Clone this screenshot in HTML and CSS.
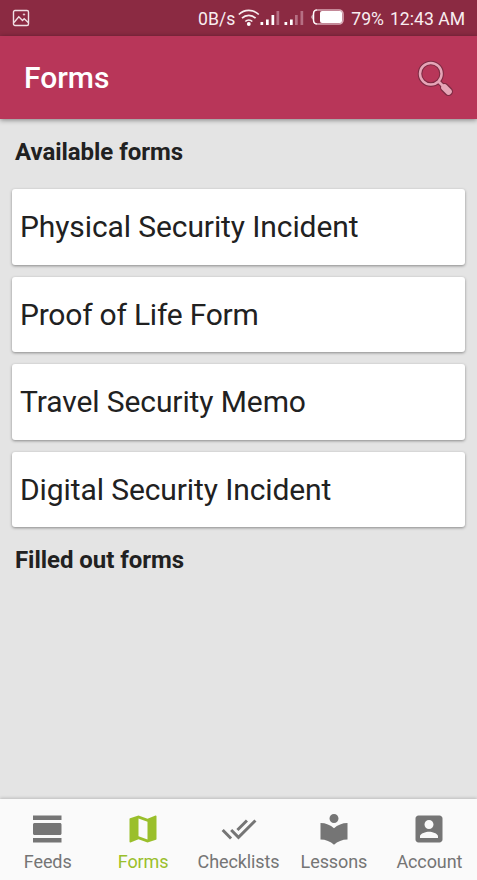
FILE: index.html
```html
<!DOCTYPE html>
<html lang="en">
<head>
<meta charset="utf-8">
<title>Forms</title>
<link rel="stylesheet" href="styles.css">
</head>
<body>
<div class="screen">
  <div class="status">
    <svg class="status-picture" width="18" height="18" viewBox="0 0 18 18" fill="none" stroke="#f0dfe4" stroke-width="1.4"><rect x="1.5" y="1.5" width="15" height="15" rx="1.5"/><path d="M2 13.5 6.8 7.8l3.7 3.7 1.7-1.8 4 3.800"/><circle cx="12" cy="5.500" r=".7" fill="#f0dfe4" stroke-width=".8"/></svg>
    <span class="speed">0B/s</span>
    <svg class="signals" width="106" height="20" viewBox="0 0 106 20">
      <g fill="none" stroke="#f8edf0" stroke-width="1.7"><path d="M.8 6.500a14.200 14.200 0 0 1 20 0M4 10.200a9.600 9.600 0 0 1 13.600 0M7.300 13.500a5 5 0 0 1 7 0"/></g>
      <circle cx="10.800" cy="16" r="1.900" fill="#fff"/>
      <path d="M22.500 14h2.700v3h-2.700zM28 11.500h2.700V17H28zM33.500 7h2.700v10h-2.700zM46.500 14h2.700v3h-2.700zM52 11.500h2.700V17H52z" fill="#fff"/>
      <path d="M38.500 3h2.700v14h-2.700zM57 7h2.700v10H57zM62.500 3h2.700v14h-2.700z" fill="#b66f83"/>
      <rect x="75.500" y="2" width="29.500" height="14" rx="4" fill="none" stroke="#d8a9b5" stroke-width="1.600"/>
      <path d="M79 2h-.5q-3 0-3 4v6q0 4 3.500 4" fill="none" stroke="#fff" stroke-width="1.200"/>
      <rect x="82" y="3" width="22" height="12" rx="2" fill="#fff"/>
      <path d="M74.500 6.500q-2 2.500 0 5z" fill="#fff"/>
    </svg>
    <span class="battery">79%</span>
    <span class="clock">12:43 AM</span>
  </div>
  <header class="appbar">
    <h1>Forms</h1>
    <svg class="search" width="40" height="40" viewBox="0 0 40 40">
      <g stroke-linecap="round" fill="none"><g stroke="#7d2b43"><circle cx="15.800" cy="15.800" r="10.800" stroke-width="4.600"/><path d="m24 24 4 4" stroke-width="5"/><path d="m29.500 29.500 4 4" stroke-width="9"/></g>
      <g stroke="#e6a5b7"><circle cx="15.800" cy="15.800" r="10.800" stroke-width="2.500"/><path d="m24 24 4 4" stroke-width="2.800"/><path d="m29.500 29.500 4 4" stroke-width="6.600"/></g></g>
    </svg>
  </header>
  <main class="content">
    <h2>Available forms</h2>
    <div class="cards">
      <div class="card"><span>Physical Security Incident</span></div>
      <div class="card tight"><span>Proof of Life Form</span></div>
      <div class="card"><span>Travel Security Memo</span></div>
      <div class="card"><span>Digital Security Incident</span></div>
    </div>
    <h2 class="filled">Filled out forms</h2>
  </main>
  <nav class="tabs">
    <div class="tab"><svg viewBox="0 0 24 24"><path d="M2 21h19v-3H2v3zM20 8H3c-.55 0-1 .45-1 1v6c0 .55.45 1 1 1h17c.55 0 1-.45 1-1V9c0-.55-.45-1-1-1zM2 3v3h19V3H2z"/></svg><span>Feeds</span></div>
    <div class="tab active"><svg viewBox="0 0 24 24"><path d="M20.500 3l-.16.030L15 5.100 9 3 3.360 4.900c-.21.070-.36.250-.36.480V20.500c0 .280.220.500.500.500l.160-.030L9 18.900l6 2.100 5.640-1.900c.210-.070.360-.250.360-.480V3.500c0-.280-.220-.500-.500-.500zM15 19l-6-2.110V5l6 2.110V19z"/></svg><span>Forms</span></div>
    <div class="tab"><svg viewBox="0 0 24 24"><path d="M18 7l-1.410-1.410-6.340 6.340 1.410 1.410L18 7zm4.240-1.410L11.660 16.170 7.480 12l-1.410 1.410L11.660 19l12-12-1.420-1.410zM.410 13.410L6 19l1.410-1.410L1.830 12 .410 13.410z"/></svg><span>Checklists</span></div>
    <div class="tab"><svg viewBox="0 0 24 24"><path d="M12 11.550C9.640 9.350 6.480 8 3 8v11c3.480 0 6.640 1.350 9 3.550 2.360-2.190 5.520-3.550 9-3.550V8c-3.480 0-6.640 1.350-9 3.550zM12 8c1.660 0 3-1.340 3-3s-1.340-3-3-3-3 1.340-3 3 1.340 3 3 3z"/></svg><span>Lessons</span></div>
    <div class="tab"><svg viewBox="0 0 24 24"><path d="M3 5v14c0 1.100.890 2 2 2h14c1.100 0 2-.900 2-2V5c0-1.100-.900-2-2-2H5c-1.110 0-2 .900-2 2zm12 4c0 1.660-1.340 3-3 3s-3-1.340-3-3 1.340-3 3-3 3 1.340 3 3zm-9 8c0-2 4-3.100 6-3.100s6 1.100 6 3.100v1H6v-1z"/></svg><span>Account</span></div>
  </nav>
</div>
</body>
</html>
```
FILE: styles.css
```css
* { box-sizing: border-box; }
body { margin: 0; font-family: Roboto, sans-serif; color: #212121; }
h1, h2 { margin: 0; }
.screen { width: 477px; height: 880px; display: flex; flex-direction: column; background: #e4e4e4; overflow: hidden; }
.status { height: 36px; flex: none; display: flex; align-items: center; padding: 0 12px; background: #8b2a42; color: #f8edf0; font-size: 17.6px; line-height: 36px; white-space: nowrap; }
.status-picture { margin-right: auto; }
.signals { margin: 0 7.5px 0 2.5px; }
.battery { margin-right: 6px; }
.status span { padding-top: 1px; }
.appbar { height: 83px; flex: none; display: flex; align-items: center; justify-content: space-between; padding: 0 22px 0 24px; background: #b83659; box-shadow: 0 1px 5px rgba(0,0,0,.45); }
.appbar h1 { color: #fff; font-size: 30px; font-weight: 500; line-height: 36px; padding-top: 1px; }
.content { flex: 1; padding: 19px 12px 0; }
.content h2 { font-size: 24px; font-weight: 700; line-height: 28px; padding-left: 3px; letter-spacing: -.05px; }
.cards { display: flex; flex-direction: column; gap: 12px; margin-top: 23px; }
.card { height: 75.5px; display: flex; align-items: center; padding-left: 8px; background: #fff; border-radius: 3px; box-shadow: 0 1px 3px rgba(0,0,0,.4); font-size: 30px; letter-spacing: -.1px; }
.card.tight { letter-spacing: -.22px; }
.content .filled { margin-top: 19px; }
.tabs { height: 81px; flex: none; display: flex; background: #fafafa; box-shadow: 0 -1px 3px rgba(0,0,0,.18); }
.tab { flex: 1; display: flex; flex-direction: column; align-items: center; padding-top: 12px; color: #757575; font-size: 18px; line-height: 22px; letter-spacing: -.1px; }
.tab svg { width: 36px; height: 36px; fill: currentColor; margin-bottom: 4px; }
.tab.active { color: #9abf2b; }
```
